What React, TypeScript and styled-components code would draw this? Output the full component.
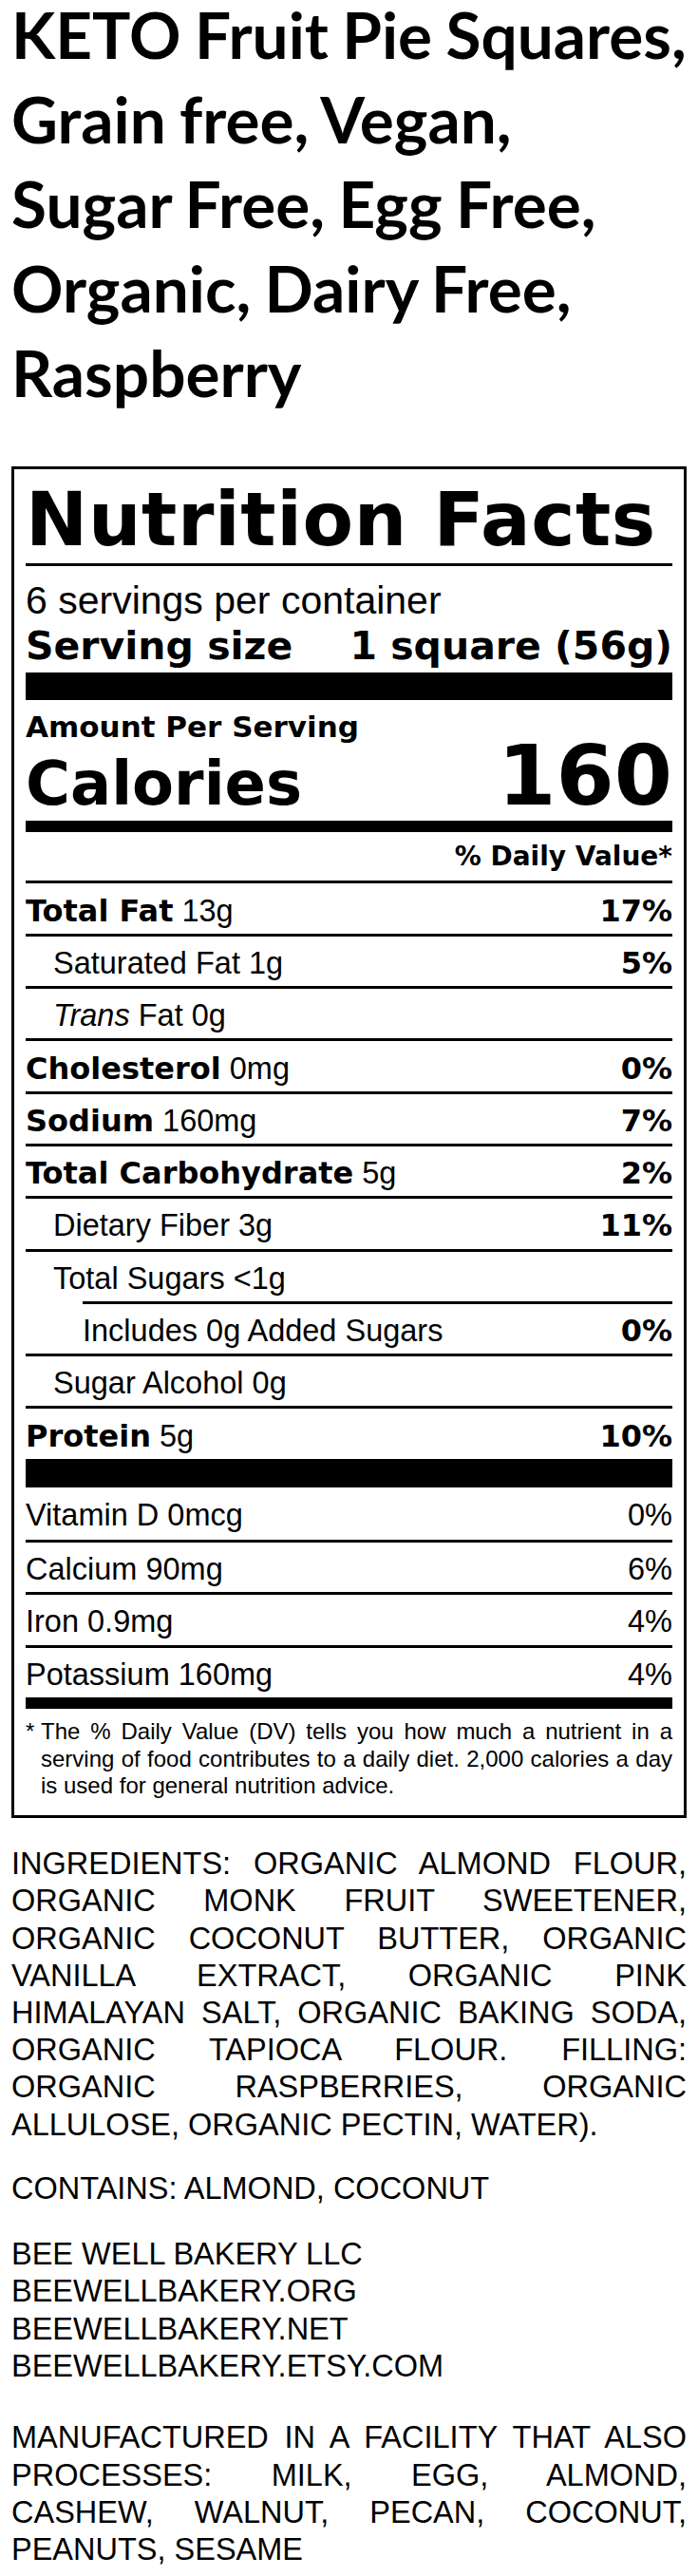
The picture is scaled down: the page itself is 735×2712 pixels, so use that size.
import React from "react";
import styled, { createGlobalStyle } from "styled-components";

const GlobalStyle = createGlobalStyle`
  html, body { margin: 0; padding: 0; background: #ffffff; color: #000000; }
  * { box-sizing: border-box; }
`;

const Page = styled.main`
  width: 735px;
  padding: 0 12px 6px;
  font-family: "Liberation Sans", Arial, sans-serif;
`;

const Title = styled.h1`
  margin: -9px 0 0;
  font-family: Lato, "Open Sans", sans-serif;
  font-weight: 700;
  font-size: 67.5px;
  line-height: 89px;
  word-spacing: -2px;
  color: #000;
`;

const TitleLine = styled.span`
  display: block;
  white-space: nowrap;
`;

const Label = styled.section`
  margin-top: 55px;
  border: 3px solid #000;
  padding: 14px 12px 16.5px;
`;

const Heavy = `
  font-family: "DejaVu Sans", "Liberation Sans", sans-serif;
  font-weight: 700;
`;

const Heading = styled.h2`
  ${Heavy}
  margin: 0;
  font-size: 78px;
  line-height: 78px;
  letter-spacing: 0.6px;
  white-space: nowrap;
`;

const Rule = styled.div<{ $h: number; $mt?: number }>`
  height: ${(p) => p.$h}px;
  margin-top: ${(p) => p.$mt ?? 0}px;
  background: #000;
`;

const ServingsPer = styled.div`
  margin-top: 13.3px;
  font-size: 41px;
  line-height: 47px;
`;

const ServingSize = styled.div`
  ${Heavy}
  display: flex;
  justify-content: space-between;
  margin-top: 0.5px;
  margin-bottom: 4.2px;
  font-size: 41px;
  line-height: 48px;
`;

const Amount = styled.div`
  ${Heavy}
  margin-top: 13px;
  font-size: 31px;
  line-height: 31px;
`;

const CaloriesRow = styled.div`
  ${Heavy}
  display: flex;
  justify-content: space-between;
  align-items: baseline;
  margin-top: 3px;
  margin-bottom: 14px;
`;

const CaloriesLabel = styled.span`
  font-size: 64px;
  line-height: 48px;
`;

const CaloriesValue = styled.span`
  font-size: 88px;
  line-height: 66px;
`;

const DailyHead = styled.div`
  ${Heavy}
  padding: 10px 0 8.4px;
  text-align: right;
  font-size: 28px;
  line-height: 32.6px;
`;

const Row = styled.div<{ $indent?: number; $offset?: number; $noBorder?: boolean }>`
  display: flex;
  justify-content: space-between;
  align-items: center;
  height: 55.3px;
  padding-top: 4px;
  padding-left: ${(p) => p.$indent ?? 0}px;
  margin-left: ${(p) => p.$offset ?? 0}px;
  border-top: ${(p) => (p.$noBorder ? "none" : "3px solid #000")};
  font-size: 32.5px;
  line-height: 38px;
  white-space: nowrap;
`;

const Name = styled.b`
  ${Heavy}
  font-size: 32px;
`;

const Italic = styled.i`
  font-style: italic;
`;

const Percent = styled.span<{ $bold?: boolean }>`
  ${(p) => (p.$bold ? Heavy : "")}
  font-size: ${(p) => (p.$bold ? "32px" : "32.5px")};
`;

const Footnote = styled.div`
  display: flex;
  padding-top: 10.5px;
  font-size: 24px;
  line-height: 28.5px;
`;

const Star = styled.span`
  flex: 0 0 16px;
`;

const FootText = styled.p`
  flex: 1;
  margin: 0;
`;

const Para = styled.p<{ $gap: number }>`
  margin: ${(p) => p.$gap}px 0 0;
  font-size: 32.5px;
  line-height: 39.2px;
`;

const Line = styled.span<{ $justify?: boolean }>`
  display: block;
  white-space: nowrap;
  text-align: ${(p) => (p.$justify ? "justify" : "left")};
  text-align-last: ${(p) => (p.$justify ? "justify" : "left")};
  ${(p) => (p.$justify ? "white-space: normal;" : "")}
`;

type Nutrient = {
  name?: string;
  italicName?: string;
  rest: string;
  dv?: string;
  indent?: number;
  offset?: number;
};

const nutrients: Nutrient[] = [
  { name: "Total Fat", rest: " 13g", dv: "17%" },
  { rest: "Saturated Fat 1g", dv: "5%", indent: 29 },
  { italicName: "Trans", rest: " Fat 0g", indent: 29 },
  { name: "Cholesterol", rest: " 0mg", dv: "0%" },
  { name: "Sodium", rest: " 160mg", dv: "7%" },
  { name: "Total Carbohydrate", rest: " 5g", dv: "2%" },
  { rest: "Dietary Fiber 3g", dv: "11%", indent: 29 },
  { rest: "Total Sugars <1g", indent: 29 },
  { rest: "Includes 0g Added Sugars", dv: "0%", offset: 60 },
  { rest: "Sugar Alcohol 0g", indent: 29 },
  { name: "Protein", rest: " 5g", dv: "10%" },
];

const vitamins = [
  { rest: "Vitamin D 0mcg", dv: "0%" },
  { rest: "Calcium 90mg", dv: "6%" },
  { rest: "Iron 0.9mg", dv: "4%" },
  { rest: "Potassium 160mg", dv: "4%" },
];

const titleLines = [
  "KETO Fruit Pie Squares,",
  "Grain free, Vegan,",
  "Sugar Free, Egg Free,",
  "Organic, Dairy Free,",
  "Raspberry",
];

const footLines = [
  "The % Daily Value (DV) tells you how much a nutrient in a",
  "serving of food contributes to a daily diet. 2,000 calories a day",
  "is used for general nutrition advice.",
];

const ingredientLines = [
  "INGREDIENTS: ORGANIC ALMOND FLOUR,",
  "ORGANIC MONK FRUIT SWEETENER,",
  "ORGANIC COCONUT BUTTER, ORGANIC",
  "VANILLA EXTRACT, ORGANIC PINK",
  "HIMALAYAN SALT, ORGANIC BAKING SODA,",
  "ORGANIC TAPIOCA FLOUR. FILLING:",
  "ORGANIC RASPBERRIES, ORGANIC",
  "ALLULOSE, ORGANIC PECTIN, WATER).",
];

const facilityLines = [
  "MANUFACTURED IN A FACILITY THAT ALSO",
  "PROCESSES: MILK, EGG, ALMOND,",
  "CASHEW, WALNUT, PECAN, COCONUT,",
  "PEANUTS, SESAME",
];

const addressLines = [
  "BEE WELL BAKERY LLC",
  "BEEWELLBAKERY.ORG",
  "BEEWELLBAKERY.NET",
  "BEEWELLBAKERY.ETSY.COM",
];

function Justified({ lines }: { lines: string[] }) {
  return (
    <>
      {lines.map((l, i) => (
        <Line key={l} $justify={i < lines.length - 1}>
          {l}
        </Line>
      ))}
    </>
  );
}

export default function App() {
  return (
    <>
      <GlobalStyle />
      <Page>
        <Title>
          {titleLines.map((l) => (
            <TitleLine key={l}>{l}</TitleLine>
          ))}
        </Title>

        <Label>
          <Heading>Nutrition Facts</Heading>
          <Rule $h={2.5} $mt={7} />
          <ServingsPer>6 servings per container</ServingsPer>
          <ServingSize>
            <span>Serving size</span>
            <span>1 square (56g)</span>
          </ServingSize>
          <Rule $h={29} />
          <Amount>Amount Per Serving</Amount>
          <CaloriesRow>
            <CaloriesLabel>Calories</CaloriesLabel>
            <CaloriesValue>160</CaloriesValue>
          </CaloriesRow>
          <Rule $h={12} />
          <DailyHead>% Daily Value*</DailyHead>

          {nutrients.map((n, i) => (
            <Row key={i} $indent={n.indent} $offset={n.offset}>
              <span>
                {n.name && <Name>{n.name}</Name>}
                {n.italicName && <Italic>{n.italicName}</Italic>}
                {n.rest}
              </span>
              {n.dv && <Percent $bold>{n.dv}</Percent>}
            </Row>
          ))}

          <Rule $h={30} />

          {vitamins.map((v, i) => (
            <Row key={v.rest} $noBorder={i === 0}>
              <span>{v.rest}</span>
              <Percent>{v.dv}</Percent>
            </Row>
          ))}

          <Rule $h={12} />

          <Footnote>
            <Star>*</Star>
            <FootText>
              <Justified lines={footLines} />
            </FootText>
          </Footnote>
        </Label>

        <Para $gap={28.7}>
          <Justified lines={ingredientLines} />
        </Para>

        <Para $gap={28.4}>CONTAINS: ALMOND, COCONUT</Para>

        <Para $gap={29.8}>
          {addressLines.map((l) => (
            <Line key={l}>{l}</Line>
          ))}
        </Para>

        <Para $gap={36.5}>
          <Justified lines={facilityLines} />
        </Para>
      </Page>
    </>
  );
}
